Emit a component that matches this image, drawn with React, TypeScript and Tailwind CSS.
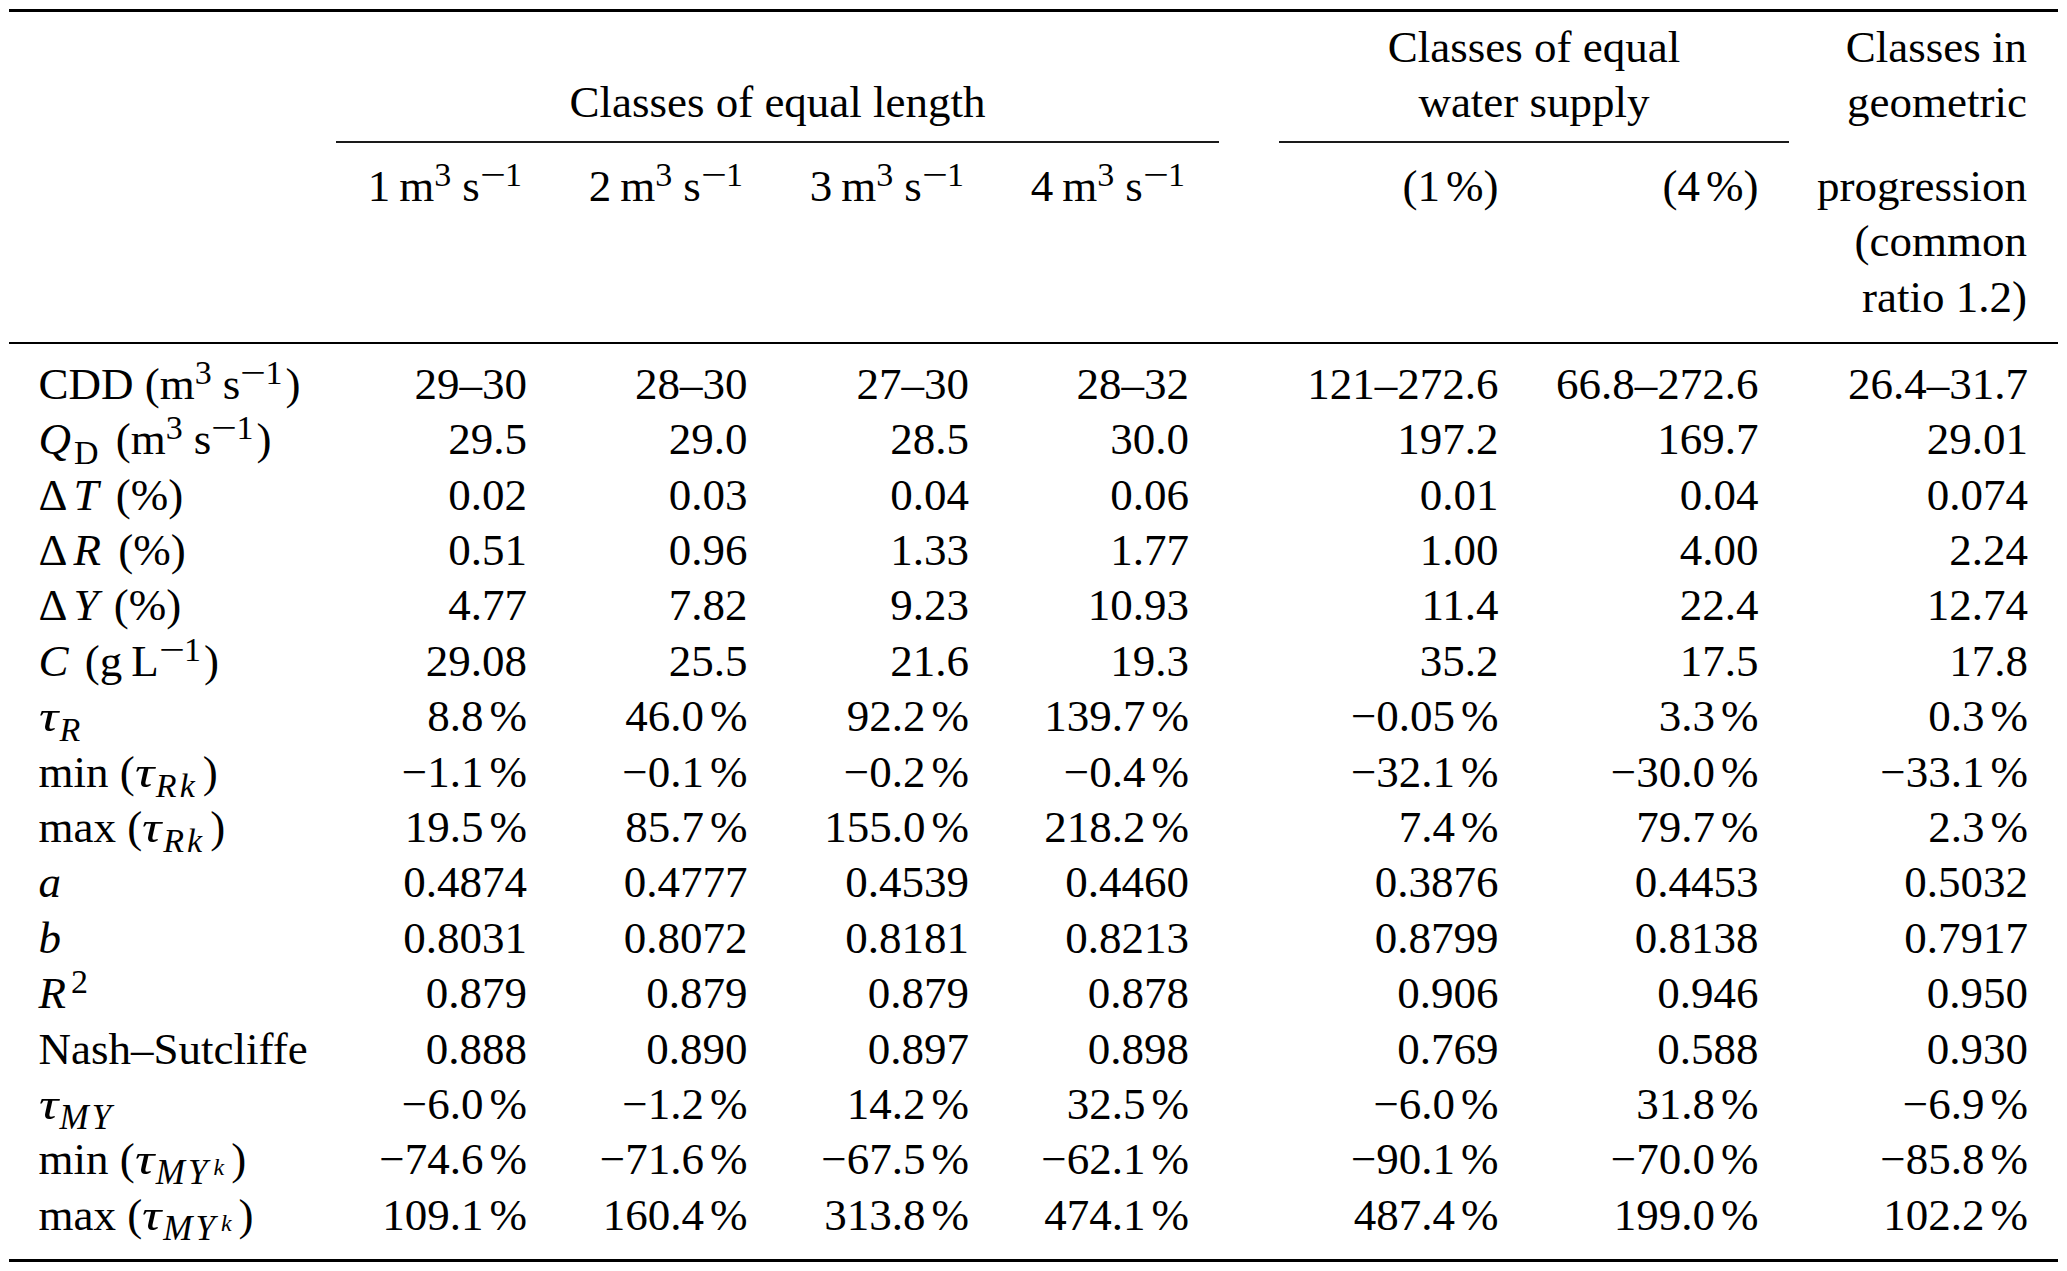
import React from "react";

// column template shared by every band of the table
const cols =
  "grid grid-cols-[327px_218px_220px_222px_223px_60px_247px_263px_269px]";

const dataPr = [
  "pr-[27px]",
  "pr-[26.5px]",
  "pr-[27px]",
  "pr-[30px]",
  "pr-[27.4px]",
  "pr-[30.5px]",
  "pr-[30px]",
];
const headPr = ["pr-[29px]", "pr-[28px]", "pr-[29px]", "pr-[31px]"];
const colStart = [
  "col-start-2",
  "col-start-3",
  "col-start-4",
  "col-start-5",
  "col-start-7",
  "col-start-8",
  "col-start-9",
];

const Sup = ({ children }: { children: React.ReactNode }) => (
  <span className="relative top-[-15px] mr-[3px] text-[34px] leading-none">
    {children}
  </span>
);

// long math minus used inside superscripts
const Neg = () => (
  <span className="inline-block mx-[3px] scale-x-[1.35]">−</span>
);

const Sub = ({
  children,
  italic,
}: {
  children: React.ReactNode;
  italic?: boolean;
}) => (
  <span
    className={
      italic
        ? "relative top-[10px] mr-[5px] text-[34px] italic leading-none tracking-[3px]"
        : "relative top-[10px] ml-[3px] mr-[6px] text-[34px] leading-none"
    }
  >
    {children}
  </span>
);

const I = ({ children }: { children: React.ReactNode }) => (
  <span className="italic">{children}</span>
);

// math-italic tau is a little wider than the text one
const Tau = () => (
  <span className="inline-block italic origin-left scale-x-[1.2] mr-[5px]">τ</span>
);

const Unit = () => (
  <>
    m<Sup>3</Sup>
    <span className="ml-[8px]">s</span>
    <Sup>
      <Neg />1
    </Sup>
  </>
);

const MY = () => (
  <span className="relative top-[10px] text-[35px] italic leading-none tracking-[3px]">
    MY
  </span>
);

// τ_{MY^k}
const TauMYk = () => (
  <>
    <Tau />
    <MY />
    <span className="relative top-[1px] ml-[3px] mr-[7px] text-[24px] italic leading-none">
      k
    </span>
  </>
);

const rows: { label: React.ReactNode; vals: string[] }[] = [
  {
    label: (
      <>
        CDD (<Unit />)
      </>
    ),
    vals: ["29–30", "28–30", "27–30", "28–32", "121–272.6", "66.8–272.6", "26.4–31.7"],
  },
  {
    label: (
      <>
        <I>Q</I>
        <Sub>D</Sub> (<Unit />)
      </>
    ),
    vals: ["29.5", "29.0", "28.5", "30.0", "197.2", "169.7", "29.01"],
  },
  {
    label: (
      <>
        Δ<span className="ml-[6px] mr-[6px] italic">T</span> (%)
      </>
    ),
    vals: ["0.02", "0.03", "0.04", "0.06", "0.01", "0.04", "0.074"],
  },
  {
    label: (
      <>
        Δ<span className="ml-[6px] mr-[6px] italic">R</span> (%)
      </>
    ),
    vals: ["0.51", "0.96", "1.33", "1.77", "1.00", "4.00", "2.24"],
  },
  {
    label: (
      <>
        Δ<span className="ml-[6px] mr-[4px] italic">Y</span> (%)
      </>
    ),
    vals: ["4.77", "7.82", "9.23", "10.93", "11.4", "22.4", "12.74"],
  },
  {
    label: (
      <>
        <span className="mr-[5px] italic">C</span> (g
        <span className="ml-[9px]">L</span>
        <Sup>
          <Neg />1
        </Sup>
        )
      </>
    ),
    vals: ["29.08", "25.5", "21.6", "19.3", "35.2", "17.5", "17.8"],
  },
  {
    label: (
      <>
        <Tau />
        <Sub italic>R</Sub>
      </>
    ),
    vals: ["8.8%", "46.0%", "92.2%", "139.7%", "−0.05%", "3.3%", "0.3%"],
  },
  {
    label: (
      <>
        min (<Tau />
        <Sub italic>Rk</Sub>)
      </>
    ),
    vals: ["−1.1%", "−0.1%", "−0.2%", "−0.4%", "−32.1%", "−30.0%", "−33.1%"],
  },
  {
    label: (
      <>
        max (<Tau />
        <Sub italic>Rk</Sub>)
      </>
    ),
    vals: ["19.5%", "85.7%", "155.0%", "218.2%", "7.4%", "79.7%", "2.3%"],
  },
  {
    label: <I>a</I>,
    vals: ["0.4874", "0.4777", "0.4539", "0.4460", "0.3876", "0.4453", "0.5032"],
  },
  {
    label: <I>b</I>,
    vals: ["0.8031", "0.8072", "0.8181", "0.8213", "0.8799", "0.8138", "0.7917"],
  },
  {
    label: (
      <>
        <I>R</I>
        <span className="relative top-[-15px] ml-[5px] text-[34px] leading-none">
          2
        </span>
      </>
    ),
    vals: ["0.879", "0.879", "0.879", "0.878", "0.906", "0.946", "0.950"],
  },
  {
    label: "Nash–Sutcliffe",
    vals: ["0.888", "0.890", "0.897", "0.898", "0.769", "0.588", "0.930"],
  },
  {
    label: (
      <>
        <Tau />
        <MY />
      </>
    ),
    vals: ["−6.0%", "−1.2%", "14.2%", "32.5%", "−6.0%", "31.8%", "−6.9%"],
  },
  {
    label: (
      <>
        min (<TauMYk />)
      </>
    ),
    vals: ["−74.6%", "−71.6%", "−67.5%", "−62.1%", "−90.1%", "−70.0%", "−85.8%"],
  },
  {
    label: (
      <>
        max (<TauMYk />)
      </>
    ),
    vals: ["109.1%", "160.4%", "313.8%", "474.1%", "487.4%", "199.0%", "102.2%"],
  },
];

const Value = ({ v }: { v: string }) =>
  v.endsWith("%") ? (
    <>
      {v.slice(0, -1)}
      <span className="ml-[6px]">%</span>
    </>
  ) : (
    <>{v}</>
  );

const HeadUnit = ({ n }: { n: string }) => (
  <>
    {n}
    <span className="ml-[9px]">m</span>
    <Sup>3</Sup>
    <span className="ml-[8px]">s</span>
    <Sup>
      <Neg />1
    </Sup>
  </>
);

export default function App() {
  return (
    <div className="w-[2067px] h-[1271px] bg-white text-black font-['Liberation_Serif','Times_New_Roman',serif] text-[45px] leading-[55.4px]">
      <div className="ml-[9px] w-[2049px] pt-[9px]">
        {/* top rule */}
        <div className="h-[2.5px] bg-black" />

        {/* spanning headings */}
        <div className={`${cols} grid-rows-[55.4px_55.4px] mt-[8.6px]`}>
          <div className="col-start-7 col-span-2 row-start-1 text-center">
            Classes of equal
          </div>
          <div className="col-start-9 row-start-1 text-right pr-[31px]">
            Classes in
          </div>
          <div className="col-start-2 col-span-4 row-start-2 text-center">
            Classes of equal length
          </div>
          <div className="col-start-7 col-span-2 row-start-2 text-center">
            water supply
          </div>
          <div className="col-start-9 row-start-2 text-right pr-[31px]">
            geometric
          </div>
        </div>

        {/* cmidrules */}
        <div className={`${cols} mt-[10px]`}>
          <div className="col-start-2 col-span-4 h-[2px] bg-[#1a1a1a]" />
          <div className="col-start-7 col-span-2 h-[2px] bg-[#1a1a1a]" />
        </div>

        {/* column headings */}
        <div className={`${cols} grid-rows-[55.4px_55.4px_55.4px] mt-[16.2px]`}>
          {["1", "2", "3", "4"].map((n, i) => (
            <div
              key={n}
              className={`${colStart[i]} row-start-1 text-right whitespace-nowrap ${headPr[i]}`}
            >
              <HeadUnit n={n} />
            </div>
          ))}
          <div className="col-start-7 row-start-1 text-right pr-[27.4px]">
            (1<span className="ml-[6px]">%</span>)
          </div>
          <div className="col-start-8 row-start-1 text-right pr-[30.5px]">
            (4<span className="ml-[6px]">%</span>)
          </div>
          <div className="col-start-9 row-start-1 text-right pr-[31px]">
            progression
          </div>
          <div className="col-start-9 row-start-2 text-right pr-[31px]">
            (common
          </div>
          <div className="col-start-9 row-start-3 text-right pr-[31px]">
            ratio 1.2)
          </div>
        </div>

        {/* midrule */}
        <div className="mt-[16.7px] h-[2px] bg-black" />

        {/* body */}
        <div className={`${cols} auto-rows-[55.4px] mt-[13px]`}>
          {rows.map((r, ri) => (
            <React.Fragment key={ri}>
              <div className="col-start-1 pl-[29.5px] whitespace-nowrap">
                {r.label}
              </div>
              {r.vals.map((v, ci) => (
                <div
                  key={ci}
                  className={`${colStart[ci]} text-right whitespace-nowrap ${dataPr[ci]}`}
                >
                  <Value v={v} />
                </div>
              ))}
            </React.Fragment>
          ))}
        </div>

        {/* bottom rule */}
        <div className="mt-[16px] h-[2.5px] bg-black" />
      </div>
    </div>
  );
}
